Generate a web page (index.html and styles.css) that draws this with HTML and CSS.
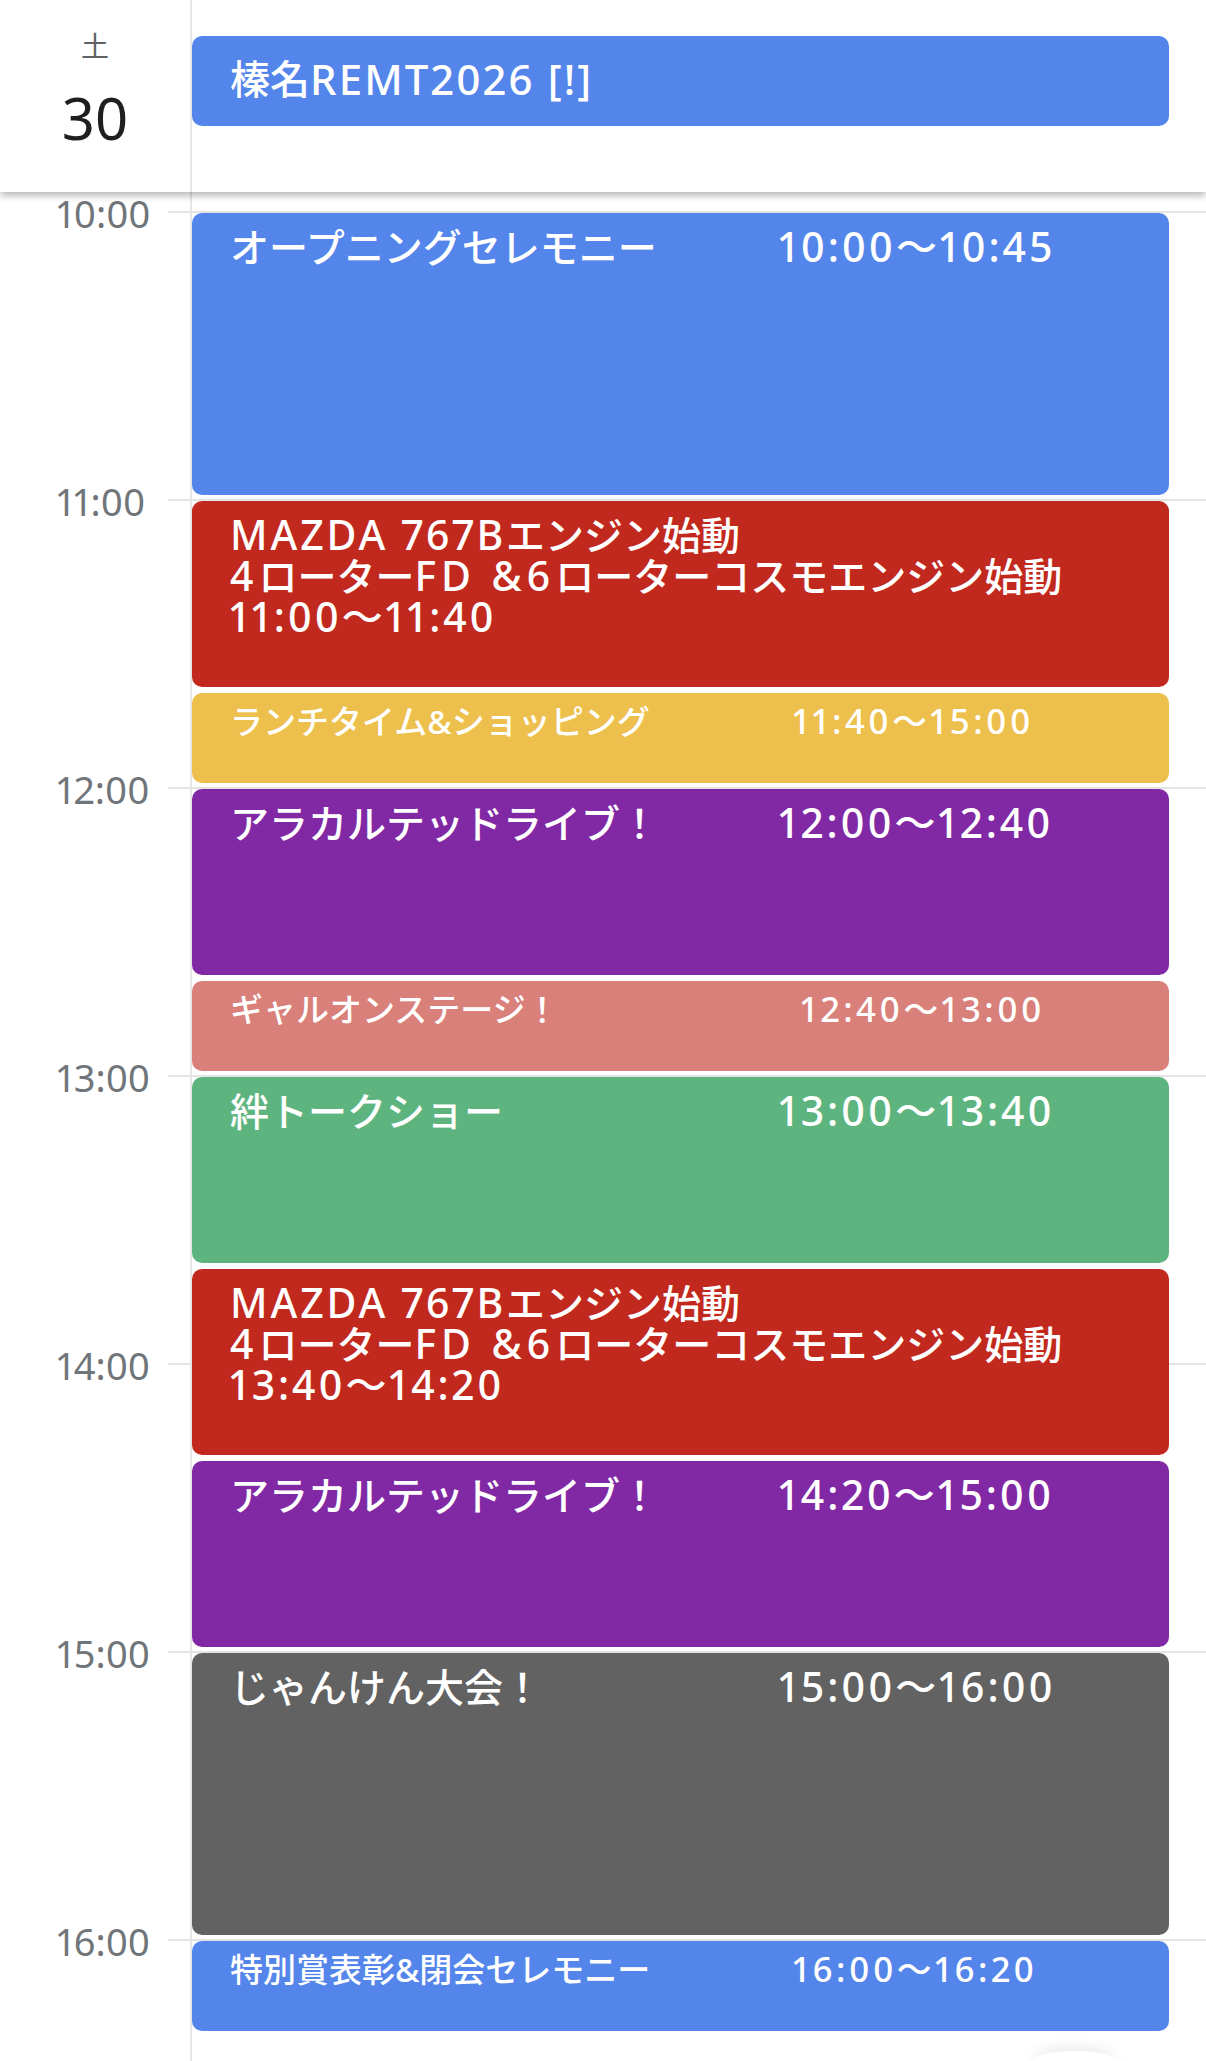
FILE: index.html
```
<!DOCTYPE html>
<html lang="ja">
<head>
<meta charset="utf-8">
<title>カレンダー</title>
<link rel="stylesheet" href="styles.css">
</head>
<body>
<header class="head">
  <div class="dayhead">
    <div class="dow">土</div>
    <div class="date">30</div>
  </div>
  <div class="allday">
    <div class="ev c-blue allday-ev">榛名<span class="lat">REMT2026 [!]</span></div>
  </div>
</header>
<main class="grid">
  <div class="gutter">
    <div class="hour">10:00</div>
    <div class="hour">11:00</div>
    <div class="hour">12:00</div>
    <div class="hour">13:00</div>
    <div class="hour">14:00</div>
    <div class="hour">15:00</div>
    <div class="hour">16:00</div>
  </div>
  <div class="day">
    <div class="ev c-blue" style="height:282px">
      <div class="row"><span class="title">オープニングセレモニー</span><span class="time lat">10:00〜10:45</span></div>
    </div>
    <div class="ev c-red" style="height:186px">
      <div class="line"><span class="lat">MAZDA 767B</span>エンジン始動</div>
      <div class="line"><span class="lat wide">4</span>ローター<span class="lat wide">FD &amp;6</span>ローターコスモエンジン始動</div>
      <div class="line"><span class="lat">11:00〜11:40</span></div>
    </div>
    <div class="ev small c-yellow" style="height:90px">
      <div class="row"><span class="title">ランチタイム&amp;ショッピング</span><span class="time lat">11:40〜15:00</span></div>
    </div>
    <div class="ev c-purple" style="height:186px">
      <div class="row"><span class="title">アラカルテッドライブ！</span><span class="time lat">12:00〜12:40</span></div>
    </div>
    <div class="ev small c-salmon" style="height:90px">
      <div class="row"><span class="title">ギャルオンステージ！</span><span class="time lat">12:40〜13:00</span></div>
    </div>
    <div class="ev c-green" style="height:186px">
      <div class="row"><span class="title">絆トークショー</span><span class="time lat">13:00〜13:40</span></div>
    </div>
    <div class="ev c-red" style="height:186px">
      <div class="line"><span class="lat">MAZDA 767B</span>エンジン始動</div>
      <div class="line"><span class="lat wide">4</span>ローター<span class="lat wide">FD &amp;6</span>ローターコスモエンジン始動</div>
      <div class="line"><span class="lat">13:40〜14:20</span></div>
    </div>
    <div class="ev c-purple" style="height:186px">
      <div class="row"><span class="title">アラカルテッドライブ！</span><span class="time lat">14:20〜15:00</span></div>
    </div>
    <div class="ev c-gray" style="height:282px">
      <div class="row"><span class="title">じゃんけん大会！</span><span class="time lat">15:00〜16:00</span></div>
    </div>
    <div class="ev small c-blue" style="height:90px">
      <div class="row"><span class="title">特別賞表彰&amp;閉会セレモニー</span><span class="time lat">16:00〜16:20</span></div>
    </div>
  </div>
</main>
<div class="fab"></div>
</body>
</html>
```
FILE: styles.css
```
html {
  margin: 0;
  padding: 0;
  overflow: hidden;
}
body {
  margin: 0;
  padding: 0;
  width: 1206px;
  height: 2061px;
  overflow: hidden;
  position: relative;
  background: #fff;
  font-family: "Noto Sans", "Noto Sans CJK JP", sans-serif;
}
.head {
  height: 192px;
  display: flex;
  background: #fff;
  position: relative;
  z-index: 2;
  box-shadow: 0 3px 8px rgba(0, 0, 0, 0.32);
}
.dayhead {
  width: 192px;
  box-sizing: border-box;
  border-right: 2px solid #e6e6e6;
  display: flex;
  flex-direction: column;
  align-items: center;
  padding-top: 28px;
}
.dow {
  font-family: "Noto Sans CJK JP", sans-serif;
  font-size: 28px;
  line-height: 34px;
  color: #5f6368;
  margin-bottom: 24px;
}
.date {
  font-size: 58px;
  line-height: 64px;
  color: #1f1f1f;
}
.allday {
  flex: 1;
  padding: 36px 37px 0 0;
}
.ev.allday-ev {
  height: 90px;
  display: flex;
  align-items: center;
  padding: 0 0 4px 38px;
  font-size: 40px;
  line-height: 46px;
}
.allday-ev .lat {
  letter-spacing: 0.05em;
}
.grid {
  display: flex;
  height: 1869px;
  background-image: linear-gradient(to bottom, #e4e4e4 0, #e4e4e4 2px, transparent 2px);
  background-size: 1038px 288px;
  background-position: 168px 19px;
  background-repeat: repeat-y;
}
.gutter {
  width: 192px;
  flex-shrink: 0;
  box-sizing: border-box;
  border-right: 2px solid #e6e6e6;
  padding-top: 2px;
}
.hour {
  height: 288px;
  line-height: 38px;
  padding-left: 57px;
  font-size: 38px;
  color: #70757a;
  font-variant-numeric: proportional-nums;
}
.hour:last-child {
  height: auto;
}
.day {
  flex: 1;
  padding: 21px 37px 0 0;
  display: flex;
  flex-direction: column;
  gap: 6px;
}
.ev {
  border-radius: 10px;
  color: #fff;
  box-sizing: border-box;
  padding: 13px 0 0 38px;
  font-size: 39px;
  line-height: 41px;
  font-weight: 500;
  flex-shrink: 0;
  white-space: nowrap;
  overflow: hidden;
}
.ev.small {
  font-size: 33px;
  line-height: 36px;
  padding-top: 10px;
}
.lat {
  font-size: 1.05em;
  letter-spacing: 0.07em;
  font-variant-numeric: proportional-nums;
}
.lat.wide {
  letter-spacing: 0.12em;
}
.small .lat {
  letter-spacing: 0.1em;
}
.row {
  display: flex;
  align-items: baseline;
}
.title {
  width: 549px;
  flex-shrink: 0;
}
.small .title {
  width: 563px;
}
.c-salmon .title {
  width: 571px;
}
.c-blue { background: #5485eb; }
.c-red { background: #c2291e; }
.c-yellow { background: #edc04d; }
.c-purple { background: #8129a4; }
.c-salmon { background: #d9807a; }
.c-green { background: #5eb47f; }
.c-gray { background: #626262; }
.fab {
  position: absolute;
  left: 1034px;
  top: 2051px;
  width: 82px;
  height: 10px;
  border-radius: 41px 41px 0 0 / 10px 10px 0 0;
  background: #fff;
  box-shadow: 0 -2px 14px rgba(0, 0, 0, 0.12);
}
```
